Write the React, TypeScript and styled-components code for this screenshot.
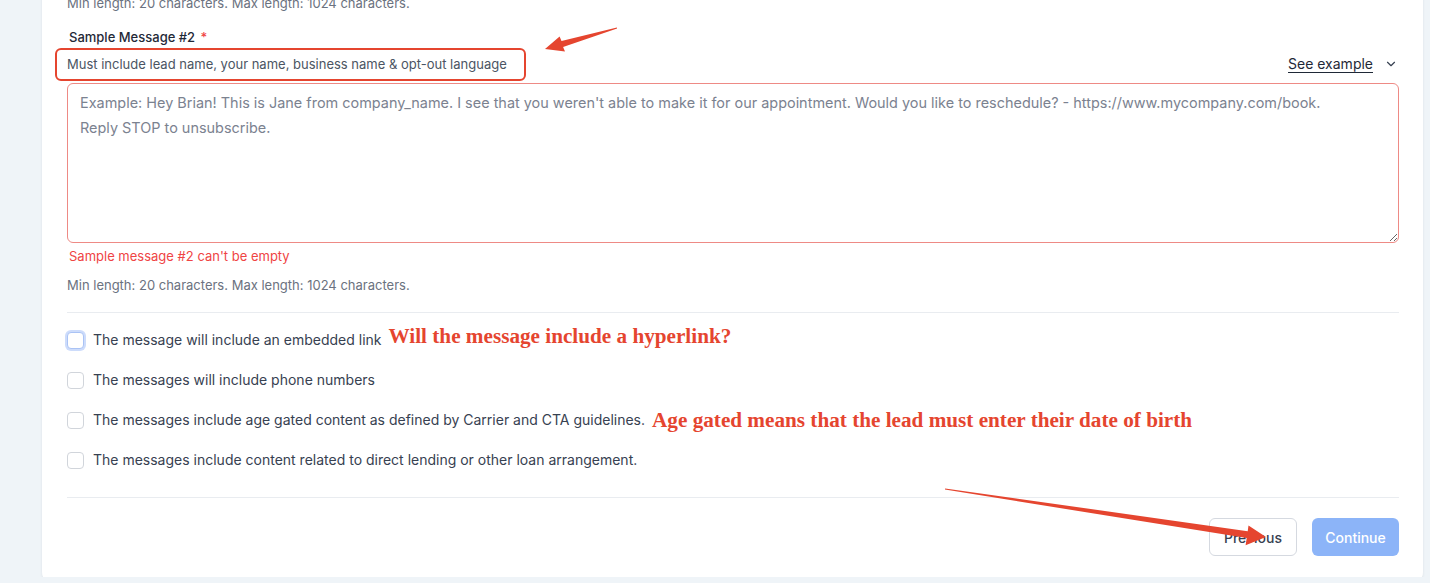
import React from 'react'
import styled, { createGlobalStyle } from 'styled-components'
import { ChevronDown } from 'lucide-react'

const GlobalStyle = createGlobalStyle`
  html, body {
    margin: 0;
    padding: 0;
    background-color: #eff4f8;
    font-family: Inter, "Noto Sans", "Liberation Sans", sans-serif;
    overflow: hidden;
  }
`

const options = [
  {
    label: 'The message will include an embedded link',
    note: 'Will the message include a hyperlink?',
    noteOffset: -4,
    focused: true,
  },
  { label: 'The messages will include phone numbers' },
  {
    label: 'The messages include age gated content as defined by Carrier and CTA guidelines.',
    note: 'Age gated means that the lead must enter their date of birth',
    noteOffset: 0,
  },
  { label: 'The messages include content related to direct lending or other loan arrangement.' },
]

const placeholder =
  "Example: Hey Brian! This is Jane from company_name. I see that you weren't able to make it for our appointment. Would you like to reschedule? - https://www.mycompany.com/book.\nReply STOP to unsubscribe."

function App() {
  return (
    <>
      <GlobalStyle />
      <Page>
        <Card>
          <Helper>Min length: 20 characters. Max length: 1024 characters.</Helper>
          <Label>
            Sample Message #2 <Required>*</Required>
          </Label>
          <HintRow>
            <Hint>
              Must include lead name, your name, business name &amp; opt-out language
              <Outline />
            </Hint>
            <ExampleToggle>
              <ExampleLink>See example</ExampleLink>
              <ChevronDown size={14} strokeWidth={2} />
            </ExampleToggle>
          </HintRow>
          <MessageInput placeholder={placeholder} />
          <ErrorText>Sample message #2 can't be empty</ErrorText>
          <Helper $spaced>Min length: 20 characters. Max length: 1024 characters.</Helper>
          <Divider $top={18} />
          <OptionList>
            {options.map((option) => (
              <OptionRow key={option.label}>
                <Checkbox type="checkbox" $focused={option.focused} />
                <OptionLabel>{option.label}</OptionLabel>
                {option.note && <Note $offset={option.noteOffset ?? 0}>{option.note}</Note>}
              </OptionRow>
            ))}
          </OptionList>
          <Divider $top={25} />
          <Footer>
            <SecondaryButton>Previous</SecondaryButton>
            <PrimaryButton>Continue</PrimaryButton>
          </Footer>
        </Card>
      </Page>
      <Arrows viewBox="0 0 1430 583" width="1430" height="583">
        <polygon
          fill="#e5452f"
          points="545,49 559.6,36.6 561.5,41.1 616.9,27.5 617.1,28.5 563.1,46.9 565,51.4"
        />
        <polygon
          fill="#e5452f"
          points="1266,537 1248.5,525.6 1247.7,531.2 945.1,488.4 944.9,489.6 1246.7,538 1245.6,545.2"
        />
      </Arrows>
    </>
  )
}

const Page = styled.div`
  padding: 0 7px 0 42px;
  height: 583px;
  box-sizing: border-box;
`

const Card = styled.div`
  margin-top: -6px;
  background-color: #fff;
  border-radius: 0 0 12px 12px;
  box-shadow: 0 1px 3px rgb(15 23 42 / 8%);
  padding: 0 24px 28px 25px;
  display: flex;
  flex-direction: column;
`

const Helper = styled.div<{ $spaced?: boolean }>`
  font-size: 13px;
  line-height: 18px;
  color: #6b7280;
  margin-top: ${(p) => (p.$spaced ? '11px' : '0')};
`

const Label = styled.div`
  margin-top: 15px;
  padding-left: 2px;
  font-size: 13px;
  line-height: 20px;
  font-weight: 500;
  color: #1f2937;
`

const Required = styled.span`
  color: #ef4444;
  margin-left: 2px;
`

const HintRow = styled.div`
  margin-top: 7px;
  display: flex;
  align-items: center;
  justify-content: space-between;
`

const Hint = styled.div`
  position: relative;
  font-size: 13px;
  line-height: 20px;
  color: #4b5563;
`

const Outline = styled.span`
  position: absolute;
  left: -12px;
  top: -6px;
  width: 471px;
  height: 33px;
  box-sizing: border-box;
  border: 2px solid #e5452f;
  border-radius: 6px;
`

const ExampleToggle = styled.div`
  display: flex;
  align-items: center;
  gap: 11px;
  color: #374151;
  padding-right: 1px;
`

const ExampleLink = styled.span`
  font-size: 14px;
  line-height: 20px;
  text-decoration: underline;
  text-underline-offset: 3px;
  color: #1f2937;
`

const MessageInput = styled.textarea`
  margin-top: 9px;
  height: 160px;
  box-sizing: border-box;
  border: 1px solid #ee8a85;
  border-radius: 6px;
  padding: 6px 12px;
  font-family: Inter, "Noto Sans", "Liberation Sans", sans-serif;
  font-size: 14.45px;
  line-height: 25px;
  outline: none;
  resize: vertical;

  &::placeholder {
    color: #7b8290;
  }
`

const ErrorText = styled.div`
  margin-top: 4px;
  padding-left: 2px;
  font-size: 13px;
  line-height: 18px;
  color: #ef4444;
`

const Divider = styled.hr<{ $top: number }>`
  margin: ${(p) => p.$top}px 0 0;
  border: none;
  border-top: 1px solid #e9ecf0;
`

const OptionList = styled.div`
  margin-top: 15px;
  display: flex;
  flex-direction: column;
  gap: 16px;
`

const OptionRow = styled.label`
  display: flex;
  align-items: center;
  height: 24px;
`

const Checkbox = styled.input<{ $focused?: boolean }>`
  appearance: none;
  margin: 0 9px 0 0;
  width: 17px;
  height: 17px;
  box-sizing: border-box;
  border: 1px solid ${(p) => (p.$focused ? '#aac3f5' : '#d1d5db')};
  border-radius: 4px;
  background: #fff;
  box-shadow: ${(p) => (p.$focused ? '0 0 0 2px #cddcfb' : 'none')};
`

const OptionLabel = styled.span`
  font-size: 14px;
  line-height: 20px;
  color: #374151;
`

const Note = styled.span<{ $offset: number }>`
  margin-left: 7px;
  font-family: "Liberation Serif", "Times New Roman", serif;
  font-weight: 700;
  font-size: 21.2px;
  line-height: 24px;
  color: #e5452f;
  position: relative;
  top: ${(p) => p.$offset}px;
`

const Footer = styled.div`
  margin-top: 20px;
  display: flex;
  justify-content: flex-end;
  gap: 15px;
`

const SecondaryButton = styled.button`
  width: 88px;
  height: 38px;
  border: 1px solid #d5d9e0;
  border-radius: 6px;
  background: #fff;
  font-family: inherit;
  font-size: 14px;
  font-weight: 500;
  color: #374151;
`

const PrimaryButton = styled.button`
  width: 87px;
  height: 38px;
  border: none;
  border-radius: 6px;
  background: #8cb4f8;
  font-family: inherit;
  font-size: 14px;
  font-weight: 500;
  color: #fff;
`

const Arrows = styled.svg`
  position: absolute;
  left: 0;
  top: 0;
  pointer-events: none;
`

export default App
